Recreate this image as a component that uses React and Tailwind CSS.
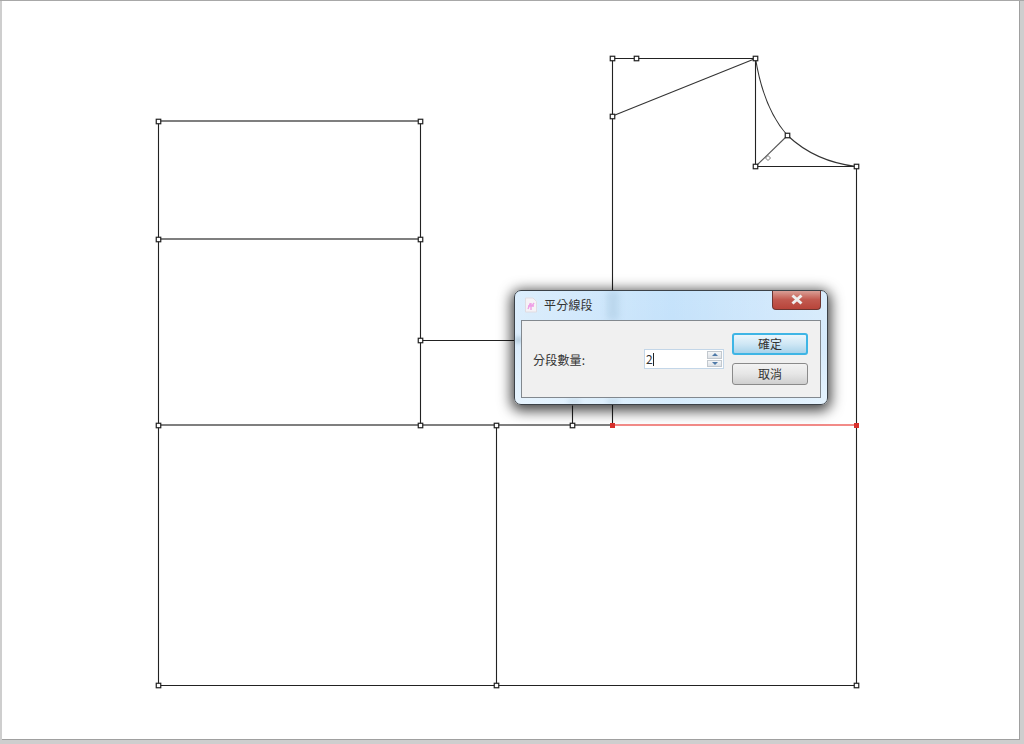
import React from "react";

const lines = [
  [158, 121, 158, 685], [420, 121, 420, 425], [420, 340, 612, 340], [158, 685, 856, 685],
  [496, 425, 496, 685], [856, 166, 856, 685], [612, 58, 612, 425], [612, 58, 755, 58],
  [755, 58, 755, 166], [755, 166, 856, 166], [572, 405, 572, 425],
];
const softLines = [
  [158, 121, 420, 121], [158, 239, 420, 239], [158, 425, 612, 425],
];
const handles = [
  [158, 121], [420, 121], [158, 239], [420, 239], [420, 340], [158, 425], [420, 425], [496, 425],
  [572, 425], [158, 685], [496, 685], [856, 685], [612, 58], [636, 58], [755, 58], [612, 116],
  [787, 135], [755, 166], [856, 166],
];

function Diagram() {
  return (
    <svg className="block w-full h-full" viewBox="2 1 1017 738" width="1017" height="738">
      {lines.map(([a, b, c, d], i) => (
        <line key={i} x1={a + 0.5} y1={b + 0.5} x2={c + 0.5} y2={d + 0.5} stroke="#222" strokeWidth="1.1" />
      ))}
      {softLines.map(([a, b, c, d], i) => (
        <line key={i} x1={a} y1={b} x2={c} y2={d} stroke="#555" strokeWidth="1.5" />
      ))}
      <line x1="612.5" y1="116" x2="755.5" y2="58.5" stroke="#333" strokeWidth="1.1" />
      <line x1="755.5" y1="166.5" x2="787.5" y2="135.5" stroke="#555" strokeWidth="1.1" />
      <path d="M755.5 58.5 C761 92 771 117 787.5 135.5 C805 152 826 163 856.5 166.5" fill="none" stroke="#333" strokeWidth="1.1" />
      <line x1="612" y1="425" x2="856" y2="425" stroke="#ee6460" strokeWidth="1.6" />
      <path d="M768 155.5 L770.5 158 L768 160.5 L765.5 158 Z" fill="#fff" stroke="#555" strokeWidth="0.8" />
      {handles.map(([x, y], i) => (
        <rect key={i} x={x - 1.75} y={y - 1.75} width="4.5" height="4.5" fill="#fff" stroke="#222" strokeWidth="1.2" />
      ))}
      <rect x="610" y="423" width="5" height="5" fill="#d8302c" />
      <rect x="854" y="423" width="5" height="5" fill="#d8302c" />
    </svg>
  );
}

function Dialog() {
  return (
    <div
      className="absolute left-[512px] top-[289px] w-[314px] h-[115px] rounded-[7px] border border-[#3c4248] bg-gradient-to-b from-[#c6e3fb] via-[#c4e1fa] to-[#d8edfd] shadow-[0_3px_13px_3px_rgba(0,0,0,0.72)] flex flex-col overflow-hidden"
      style={{ fontFamily: '"Noto Sans CJK TC", "Liberation Sans", sans-serif' }}
    >
      {/* light falling over the glass frame */}
      <div className="absolute inset-0 bg-gradient-to-r from-[#ffffff66] via-[#ffffff00] to-[#ffffff55]" />
      {/* glass reflections of the drawing */}
      <div className="absolute left-[92px] top-0 w-[12px] h-[29px] bg-[#a9c9e0] opacity-50 blur-[3px]" />
      <div className="absolute left-0 top-[46px] w-[7px] h-[6px] bg-[#8fa9bd] opacity-50 blur-[2px]" />
      <div className="absolute left-[53px] bottom-0 w-[12px] h-[5px] bg-[#9dbad0] opacity-30 blur-[2px]" />
      <div className="absolute left-[92px] bottom-0 w-[12px] h-[5px] bg-[#9dbad0] opacity-30 blur-[2px]" />

      <div className="relative h-[29px] shrink-0 flex items-center pl-[9px] pb-[2px] gap-[6px]">
        <svg width="14" height="16" viewBox="0 0 14 16" className="shrink-0">
          <path d="M1.5 1 H9 L12.5 4.5 V15 H1.5 Z" fill="#f5f2f6" stroke="#e0dce2" />
          <path d="M4 12 L6 7 L8 9 L10 6 M4 9 H10 M7 6 V13" fill="none" stroke="#ee9fe6" strokeWidth="1.4" />
        </svg>
        <span className="text-[12px] leading-none text-[#333] tracking-[0.2px]">平分線段</span>
        <div className="absolute right-[6px] -top-[1px] w-[49px] h-[20px] rounded-b-[4px] border border-[#6e3530] border-t-0 bg-gradient-to-b from-[#dba69e] via-[#c25a50] to-[#b8443a] flex items-center justify-center">
          <svg width="14" height="11" viewBox="0 0 14 11">
            <path d="M2.5 1.5 L11.5 9.5 M11.5 1.5 L2.5 9.5" stroke="#eee" strokeWidth="3" />
          </svg>
        </div>
      </div>

      <div className="relative mx-[6px] h-[78px] border border-[#82888e] bg-[#f0f0f0] flex">
        <div className="flex items-center pl-[11px] pt-[1px] w-[122px] shrink-0 h-full">
          <span className="text-[12px] text-[#333] tracking-[0.2px]">分段數量:</span>
        </div>
        <div className="flex items-center h-full">
          <div className="w-[80px] h-[20px] border border-[#c3d6e8] bg-white flex items-center justify-between pl-[1px] pr-[1px]">
            <span className="text-[12px] leading-none text-[#333] flex items-center">
              2<span className="inline-block w-px h-[13px] bg-[#222]" />
            </span>
            <div className="flex flex-col gap-px w-[15px] h-[16px]">
              <div className="flex-1 border border-[#c2c8ce] bg-gradient-to-b from-[#f4f6f8] to-[#dde1e6] flex items-center justify-center">
                <svg width="6" height="3" viewBox="0 0 6 3"><path d="M3 0 L6 3 H0 Z" fill="#4f7aa8" /></svg>
              </div>
              <div className="flex-1 border border-[#c2c8ce] bg-gradient-to-b from-[#f4f6f8] to-[#dde1e6] flex items-center justify-center">
                <svg width="6" height="3" viewBox="0 0 6 3"><path d="M0 0 H6 L3 3 Z" fill="#4f7aa8" /></svg>
              </div>
            </div>
          </div>
        </div>
        <div className="ml-[8px] pt-[12px] flex flex-col gap-[8px]">
          <button className="w-[76px] h-[22px] rounded-[3px] border-2 border-[#3eb5e5] bg-gradient-to-b from-[#eaf6fc] via-[#cfe7f5] to-[#a9d3ea] text-[12px] leading-none text-[#333] flex items-center justify-center">
            確定
          </button>
          <button className="w-[76px] h-[22px] rounded-[3px] border border-[#8a8a8a] bg-gradient-to-b from-[#f3f3f3] via-[#e6e6e6] to-[#cfcfcf] text-[12px] leading-none text-[#333] flex items-center justify-center">
            取消
          </button>
        </div>
      </div>
    </div>
  );
}

export default function App() {
  return (
    <div className="w-[1024px] h-[744px] bg-[#cecece] overflow-hidden border-t border-t-[#a8a8a8] pl-[2px]">
      <div className="relative w-[1018px] h-[739px] bg-white border-r border-b border-[#a0a0a0]">
        <Diagram />
        <Dialog />
      </div>
    </div>
  );
}
